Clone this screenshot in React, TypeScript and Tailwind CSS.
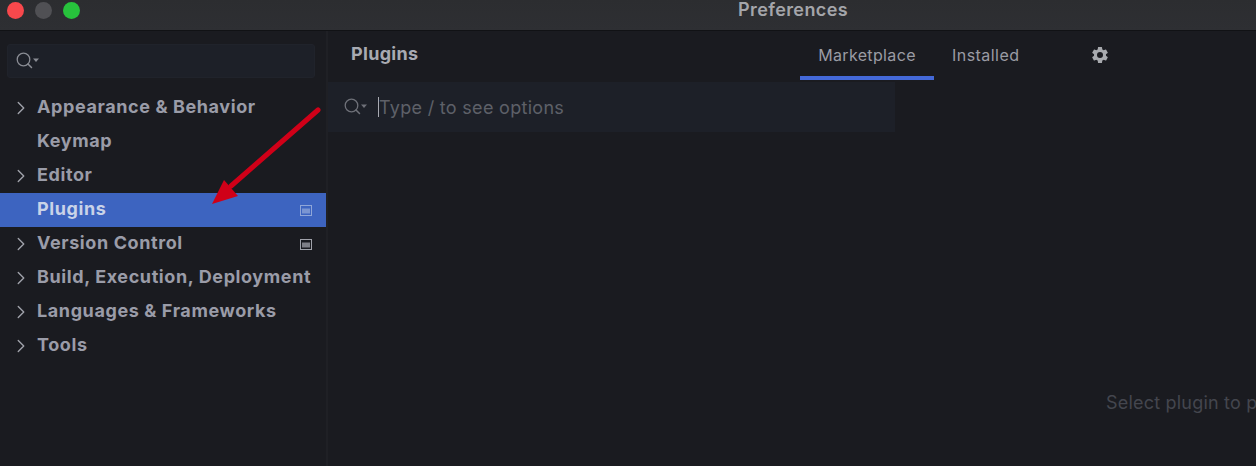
import { ChevronRight } from 'lucide-react'

const font = { inter: "font-['Inter','Noto_Sans',sans-serif]" }

function SearchIcon({ color }: { color: string }) {
  return (
    <svg width="24" height="20" viewBox="0 0 24 20" fill="none" className="shrink-0">
      <circle cx="7.5" cy="8.5" r="6.3" stroke={color} strokeWidth="1.3" />
      <path d="M12 13 L15.5 16.5" stroke={color} strokeWidth="1.5" strokeLinecap="round" />
      <path d="M17 7.5 h6 l-3 3.5 z" fill={color} />
    </svg>
  )
}

function PanelIcon({ color }: { color: string }) {
  return (
    <svg width="12" height="11" viewBox="0 0 12 11" fill="none" className="shrink-0">
      <rect x="0.5" y="0.5" width="11" height="10" stroke={color} strokeWidth="1" />
      <rect x="2" y="3.5" width="8" height="5" fill={color} fillOpacity="0.75" />
    </svg>
  )
}

const items = [
  { label: 'Appearance & Behavior', arrow: true },
  { label: 'Keymap', arrow: false },
  { label: 'Editor', arrow: true },
  { label: 'Plugins', arrow: false, selected: true, panel: true },
  { label: 'Version Control', arrow: true, panel: true },
  { label: 'Build, Execution, Deployment', arrow: true },
  { label: 'Languages & Frameworks', arrow: true },
  { label: 'Tools', arrow: true },
]

function TreeRow({ item }: { item: (typeof items)[number] }) {
  return (
    <div
      className={`flex items-center h-[34px] pl-[10px] pr-[14px] ${
        item.selected ? 'bg-[#3d64c0] text-[#c9d3e8]' : 'text-[#9a9ca8]'
      }`}
    >
      <div className="w-[27px] shrink-0 -mt-[1px]">
        {item.arrow && <ChevronRight size={22} strokeWidth={1.5} className="text-[#a0a2aa]" />}
      </div>
      <span className="flex-1 whitespace-nowrap text-[18px] leading-[24px] pb-[2px] font-bold tracking-[0.6px]">
        {item.label}
      </span>
      {item.panel && <PanelIcon color={item.selected ? '#8fa6d8' : '#a0a2aa'} />}
    </div>
  )
}

export default function App() {
  return (
    <div className={`relative w-[1256px] h-[466px] overflow-hidden bg-[#1a1b20] flex flex-col ${font.inter}`}>
      {/* title bar */}
      <div className="relative h-[31px] shrink-0 flex items-center bg-gradient-to-b from-[#2c2d30] to-[#2e2f33] border-b border-[#111215]">
        <div className="flex items-center gap-[11px] pl-[7px] pb-[10px]">
          <span className="w-[17px] h-[17px] rounded-full bg-[#f8484c]" />
          <span className="w-[17px] h-[17px] rounded-full bg-[#505054]" />
          <span className="w-[17px] h-[17px] rounded-full bg-[#27c23c]" />
        </div>
        <span className="absolute left-[738px] top-[-2px] text-[18px] leading-[24px] font-semibold text-[#a4a5aa] tracking-[0.4px]">
          Preferences
        </span>
      </div>

      <div className="flex flex-1 min-h-0">
        {/* sidebar */}
        <div className="w-[326px] shrink-0 pt-[13px] bg-[#1a1b20]">
          <div className="mx-[7px] w-[308px] h-[34px] flex items-center pl-[8px] rounded-[3px] bg-[#1d2028] border border-[#20232b]">
            <SearchIcon color="#8a8c94" />
          </div>
          <div className="mt-[13px]">
            {items.map((item) => (
              <TreeRow key={item.label} item={item} />
            ))}
          </div>
        </div>
        <div className="w-[2px] shrink-0 bg-[#1f2025]" />

        {/* content */}
        <div className="flex-1 min-w-0 flex flex-col">
          <div className="h-[49px] shrink-0 flex items-stretch pl-[23px]">
            <span className="w-[449px] shrink-0 pt-[10px] text-[18px] leading-[26px] font-bold tracking-[0.3px] text-[#a8aab2]">
              Plugins
            </span>
            <div className="w-[134px] shrink-0 flex justify-center pt-[12px] border-b-[4px] border-[#4469d8] text-[16px] leading-[24px] tracking-[0.35px] text-[#9a9ca4]">
              Marketplace
            </div>
            <span className="ml-[18px] pt-[12px] text-[16px] leading-[24px] tracking-[0.45px] text-[#9a9ca4]">
              Installed
            </span>
            <div className="ml-[71px] pt-[14px]">
              <svg width="20" height="20" viewBox="0 0 24 24" fill="#a8aaae">
                <path d="M19.14 12.94c.04-.3.06-.61.06-.94 0-.32-.02-.64-.07-.94l2.03-1.58a.49.49 0 0 0 .12-.61l-1.92-3.32a.49.49 0 0 0-.59-.22l-2.39.96c-.5-.38-1.03-.7-1.62-.94l-.36-2.54a.48.48 0 0 0-.48-.41h-3.84c-.24 0-.43.17-.47.41l-.36 2.54c-.59.24-1.13.57-1.62.94l-2.39-.96a.49.49 0 0 0-.59.22L2.74 8.87c-.12.21-.08.47.12.61l2.03 1.58c-.05.3-.09.63-.09.94s.02.64.07.94l-2.03 1.58a.49.49 0 0 0-.12.61l1.92 3.32c.12.22.37.29.59.22l2.39-.96c.5.38 1.03.7 1.62.94l.36 2.54c.05.24.24.41.48.41h3.84c.24 0 .44-.17.47-.41l.36-2.54c.59-.24 1.13-.56 1.62-.94l2.39.96c.22.08.47 0 .59-.22l1.92-3.32c.12-.22.07-.47-.12-.61l-2.01-1.58zM12 15.6A3.6 3.6 0 1 1 12 8.4a3.6 3.6 0 0 1 0 7.2z" />
              </svg>
            </div>
          </div>

          <div className="mt-[2px] w-[567px] h-[50px] shrink-0 flex items-center pl-[16px] bg-[#1d2028]">
            <SearchIcon color="#6f7179" />
            <span className="ml-[10px] w-[1px] h-[20px] bg-[#a8aab2]" />
            <span className="text-[18px] text-[#5e6068] tracking-[0.3px]">Type / to see options</span>
          </div>

          <div className="flex-1 flex justify-end overflow-hidden">
            <span className="mt-[258px] w-[150px] overflow-hidden whitespace-nowrap text-[18px] leading-[26px] text-[#44464e] tracking-[0.2px]">
              Select plugin to preview
            </span>
          </div>
        </div>
      </div>

      {/* red annotation arrow */}
      <svg className="absolute left-[205px] top-[100px]" width="125" height="110" viewBox="0 0 125 110" fill="none">
        <path d="M113 10 L26 86" stroke="#d00018" strokeWidth="5" strokeLinecap="round" />
        <path d="M7 104 L19 80 L33 96 Z" fill="#d00018" />
      </svg>
    </div>
  )
}
